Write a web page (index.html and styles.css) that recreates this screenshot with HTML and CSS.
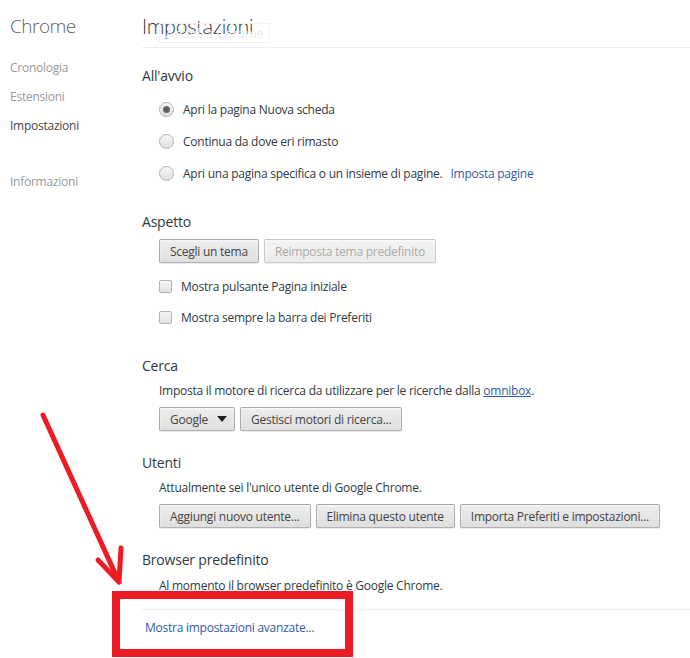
FILE: index.html
```html
<!DOCTYPE html>
<html lang="it">
<head>
    <meta charset="UTF-8">
    <title>Impostazioni</title>
    <link rel="stylesheet" href="styles.css">
</head>
<body>
<div class="page">
    <nav class="sidebar">
        <h1 class="brand">Chrome</h1>
        <ul class="menu">
            <li>Cronologia</li>
            <li>Estensioni</li>
            <li class="selected">Impostazioni</li>
            <li class="about">Informazioni</li>
        </ul>
    </nav>

    <main class="main">
        <header class="header">
            <h1>Impostazioni</h1>
            <span class="ghost">Accedi a Chrome</span>
        </header>

        <section class="section">
            <h3>All'avvio</h3>
            <div class="row radio-row">
                <span class="radio checked"></span>
                <span>Apri la pagina Nuova scheda</span>
            </div>
            <div class="row radio-row">
                <span class="radio"></span>
                <span>Continua da dove eri rimasto</span>
            </div>
            <div class="row radio-row">
                <span class="radio"></span>
                <span>Apri una pagina specifica o un insieme di pagine.</span>
                <a class="link" href="#">Imposta pagine</a>
            </div>
        </section>

        <section class="section">
            <h3>Aspetto</h3>
            <div class="buttons">
                <button type="button">Scegli un tema</button>
                <button type="button" disabled>Reimposta tema predefinito</button>
            </div>
            <div class="row check-row">
                <span class="checkbox"></span>
                <span>Mostra pulsante Pagina iniziale</span>
            </div>
            <div class="row check-row">
                <span class="checkbox"></span>
                <span>Mostra sempre la barra dei Preferiti</span>
            </div>
        </section>

        <section class="section">
            <h3>Cerca</h3>
            <p class="desc">Imposta il motore di ricerca da utilizzare per le ricerche dalla <a class="link underline" href="#">omnibox</a>.</p>
            <div class="buttons">
                <button type="button" class="select">Google <span class="caret"></span></button>
                <button type="button">Gestisci motori di ricerca...</button>
            </div>
        </section>

        <section class="section">
            <h3>Utenti</h3>
            <p class="desc">Attualmente sei l'unico utente di Google Chrome.</p>
            <div class="buttons">
                <button type="button">Aggiungi nuovo utente...</button>
                <button type="button">Elimina questo utente</button>
                <button type="button">Importa Preferiti e impostazioni...</button>
            </div>
        </section>

        <section class="section">
            <h3>Browser predefinito</h3>
            <p class="desc">Al momento il browser predefinito è Google Chrome.</p>
        </section>

        <footer class="footer">
            <a class="link" href="#">Mostra impostazioni avanzate...</a>
        </footer>
    </main>
</div>

<!-- annotazione in rosso sopra la pagina -->
<svg class="markup" width="690" height="658" viewBox="0 0 690 658">
    <g stroke="#ed1c24" fill="none" stroke-linecap="round" stroke-linejoin="round">
        <path d="M43 415 L119 582" stroke-width="5"/>
        <path d="M98 560 L119 582 L121 548" stroke-width="5"/>
        <rect x="116" y="595" width="233" height="58" stroke-width="8" stroke-linecap="butt" stroke-linejoin="miter"/>
    </g>
</svg>
</body>
</html>
```

FILE: styles.css
```css
* {
    box-sizing: border-box;
}

body {
    margin: 0;
    background: #fff;
    color: #303942;
    font-family: "Open Sans", "Noto Sans", Arial, sans-serif;
    font-size: 12px;
    letter-spacing: -0.25px;
    overflow: hidden;
}

.page {
    display: flex;
    width: 690px;
    height: 658px;
}

.sidebar {
    width: 142px;
    flex-shrink: 0;
    padding-left: 10px;
}

.brand {
    margin: 0;
    padding-top: 13px;
    font-size: 19px;
    font-weight: 300;
    line-height: 26px;
    color: #5c6166;
    letter-spacing: -0.5px;
}

.menu {
    list-style: none;
    margin: 19px 0 0 0;
    padding: 0;
}

.menu li {
    height: 29px;
    line-height: 20px;
    color: #999;
}

.menu li.selected {
    color: #464646;
}

.menu li.about {
    margin-top: 27px;
}

.main {
    flex: 1;
}

.header {
    position: relative;
    height: 48px;
    border-bottom: 1px solid #eeeeee;
    padding-top: 14px;
}

.header h1 {
    margin: 0;
    font-size: 20px;
    font-weight: 300;
    line-height: 26px;
    color: #303942;
    letter-spacing: -0.3px;
}

.ghost {
    position: absolute;
    left: 17px;
    top: 23px;
    width: 111px;
    height: 20px;
    border: 1px solid #f2f2f2;
    color: #ececec;
    font-size: 13px;
    line-height: 18px;
    text-align: center;
}

/* padding instead of margin so the gaps don't collapse */
.section {
    padding-top: 20px;
}

.section:first-of-type {
    padding-top: 18px;
}

.section h3 {
    margin: 0 0 7px 0;
    font-size: 14px;
    font-weight: 400;
    line-height: 20px;
    color: #303942;
    letter-spacing: -0.2px;
}

.row {
    display: flex;
    align-items: center;
    padding-left: 17px;
}

.row:last-child {
    margin-bottom: 3px;
}

.radio-row {
    height: 32px;
}

.check-row {
    height: 31px;
}

.radio {
    width: 15px;
    height: 15px;
    border-radius: 50%;
    border: 1px solid #b4b4b4;
    background: linear-gradient(#f6f6f6, #dedede);
    margin-right: 9px;
    display: flex;
    align-items: center;
    justify-content: center;
}

.radio.checked::after {
    content: "";
    width: 7px;
    height: 7px;
    border-radius: 50%;
    background: radial-gradient(#555, #777);
}

.checkbox {
    width: 13px;
    height: 13px;
    border-radius: 2px;
    border: 1px solid #b4b4b4;
    background: linear-gradient(#f6f6f6, #e2e2e2);
    margin-right: 9px;
}

.link {
    color: #2f5ba6;
    text-decoration: none;
    margin-left: 8px;
}

.link.underline {
    margin-left: 0;
    text-decoration: underline;
}

.buttons {
    display: flex;
    gap: 5px;
    padding-left: 17px;
    margin-top: 7px;
    margin-bottom: 8px;
}

.desc + .buttons {
    margin-top: 0;
    margin-bottom: 2px;
}

button {
    height: 24px;
    padding: 0 10px;
    border: 1px solid rgba(0, 0, 0, 0.25);
    border-radius: 2px;
    background: linear-gradient(#ededed, #dedede);
    box-shadow: 0 1px 0 rgba(0, 0, 0, 0.08), inset 0 1px 2px rgba(255, 255, 255, 0.75);
    color: #444;
    font-family: inherit;
    font-size: 12px;
    letter-spacing: -0.25px;
}

button:disabled {
    color: #aaa;
    background: linear-gradient(#f3f3f3, #ececec);
    border-color: rgba(0, 0, 0, 0.15);
}

button.select {
    display: flex;
    align-items: center;
    gap: 9px;
    padding-right: 7px;
}

.caret {
    width: 0;
    height: 0;
    border-left: 5px solid transparent;
    border-right: 5px solid transparent;
    border-top: 6px solid #222;
}

.desc {
    margin: 0 0 7px 0;
    padding-left: 17px;
    line-height: 18px;
}

.section h3 + .desc {
    margin-top: -1px;
}

.section:last-of-type .desc {
    margin-top: 1px;
    margin-bottom: 5px;
}

.footer {
    margin-top: 14px;
    border-top: 1px solid #eeeeee;
    padding: 9px 0 0 3px;
    line-height: 18px;
}

.footer .link {
    margin-left: 0;
}

.markup {
    position: absolute;
    left: 0;
    top: 0;
    pointer-events: none;
}
```
